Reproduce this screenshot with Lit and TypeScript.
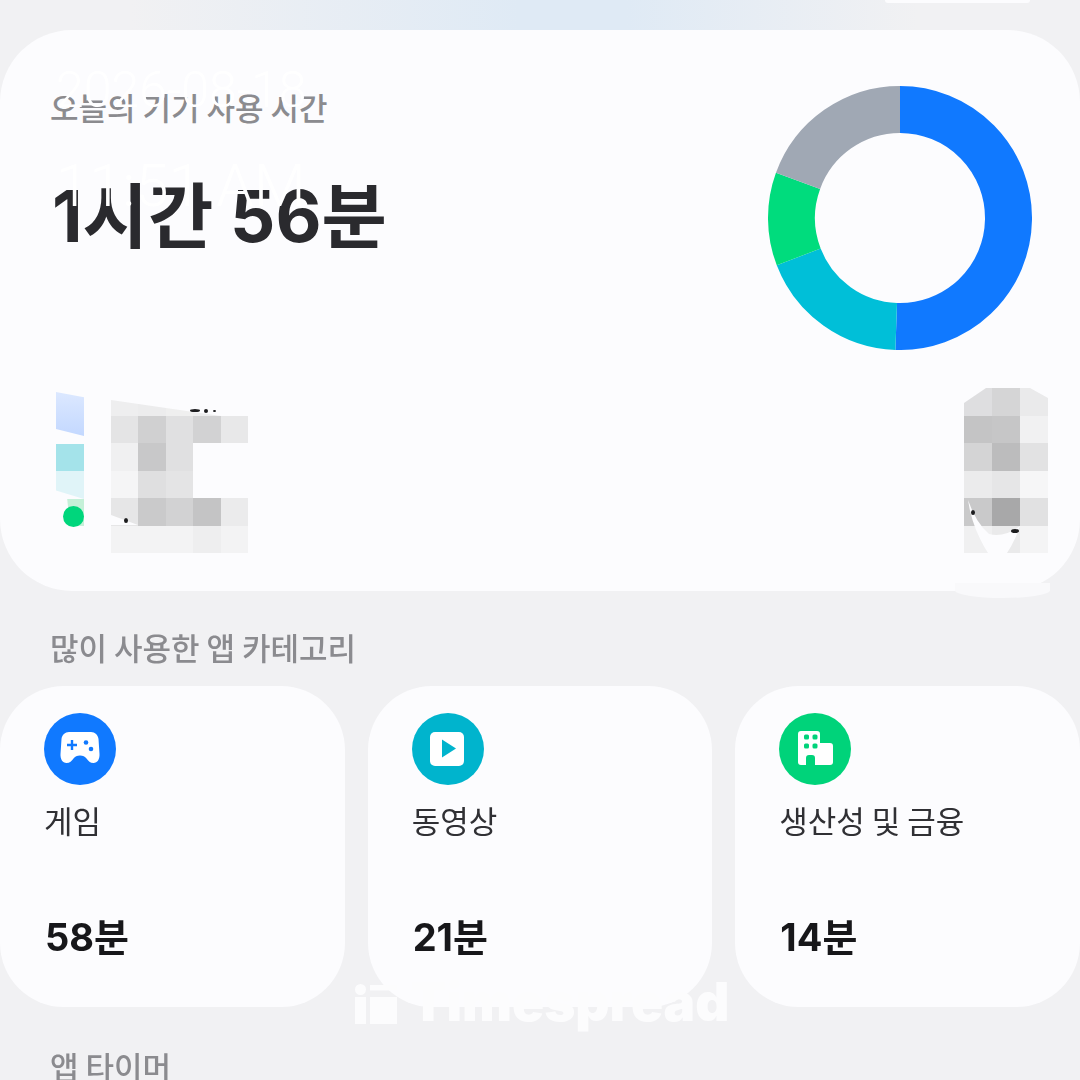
import { LitElement, html, css, svg } from 'lit';
import { customElement } from 'lit/decorators.js';

const CX = 132;
const R = 108.5;

// start / end angle in degrees, clockwise from 12 o'clock
const SEGMENTS = [
  { from: 0, to: 182, color: '#1079ff' },
  { from: 182, to: 249, color: '#00bfd8' },
  { from: 249, to: 290, color: '#00dc7d' },
  { from: 290, to: 360, color: '#a0a8b4' },
];

const LEFT_MOSAIC = [
  ['#eeeeef', '#ececed', '#efefef', '#ededee', ''],
  ['#e4e4e5', '#d0d0d1', '#e0e0e1', '#d2d2d3', '#e8e8e9'],
  ['#f0f0f1', '#c8c8c9', '#e0e0e1', '', ''],
  ['#f5f5f6', '#dfdfe0', '#e4e4e5', '', ''],
  ['#e6e6e7', '#cacacb', '#d2d2d3', '#c4c4c5', '#ebebec'],
  ['#f3f3f4', '#f3f3f4', '#f3f3f4', '#eeeeef', '#f3f3f4'],
];

const RIGHT_MOSAIC = [
  ['#dedee0', '#d5d5d6', '#eaeaeb'],
  ['#c4c4c5', '#c6c6c7', '#f1f1f2'],
  ['#d4d4d5', '#bcbcbd', '#e2e2e3'],
  ['#ebebec', '#e6e6e7', '#f6f6f7'],
  ['#c9c9ca', '#a8a8a9', '#e1e1e2'],
  ['#f0f0f1', '#eaeaeb', '#f4f4f5'],
];

// leftover specks of the blurred-out text: x, y, w, h inside each mosaic
const LEFT_SPECKS = [[79, 21, 10, 3], [93, 21, 4, 4], [102, 22, 3, 2], [13, 130, 4, 5]];
const RIGHT_SPECKS = [[7, 122, 4, 5], [47, 141, 8, 4]];

const GAME_ICON = svg`<path fill="#fff" d="M25 19h22c4 0 7 3 7.500 7l1 15c.3 5-2 9-6 9-3.500 0-5-2-7-4.500-1.500-2-3.500-3-6.500-3s-5 1-6.500 3c-2 2.500-3.500 4.500-7 4.500-4 0-6.300-4-6-9l1-15c.5-4 3.500-7 7.500-7z"/>
  <path fill="none" stroke="#1079ff" stroke-width="2.400" d="M28 27v10M23 32h10"/>
  <circle cx="42" cy="29.500" r="2.300" fill="#1079ff"/><circle cx="47" cy="36" r="2.300" fill="#1079ff"/>`;

const PLAY_ICON = svg`<rect x="18" y="19" width="34" height="34" rx="5" fill="#fff"/>
  <path fill="#00b4cd" d="M30 26.500v18l14-9z"/>`;

const BUILDING_ICON = svg`<path fill="#fff" d="M22 18h16c2 0 3 1 3 3v9h10c2 0 3 1 3 3v16c0 2-1 3-3 3H36v-7c0-2-1-3-3-3h-3c-2 0-3 1-3 3v7h-5c-2 0-3-1-3-3V21c0-2 1-3 3-3z"/>
  <g fill="#00d37a"><rect x="25" y="21.500" width="5" height="5" rx="1.500"/><rect x="33.500" y="21.500" width="5" height="5" rx="1.500"/>
  <rect x="25" y="30.500" width="5" height="5" rx="1.500"/><rect x="33.500" y="30.500" width="5" height="5" rx="1.500"/></g>`;

const CATEGORIES = [
  { icon: GAME_ICON, color: '#1079ff', label: '게임', value: '58분' },
  { icon: PLAY_ICON, color: '#00b4cd', label: '동영상', value: '21분' },
  { icon: BUILDING_ICON, color: '#00d37a', label: '생산성 및 금융', value: '14분' },
];

function arc(from: number, to: number) {
  const a = ((from - 90) * Math.PI) / 180;
  const b = ((to - 90) * Math.PI) / 180;
  const large = to - from > 180 ? 1 : 0;
  return `M${CX + R * Math.cos(a)} ${CX + R * Math.sin(a)}A${R} ${R} 0 ${large} 1 ${CX + R * Math.cos(b)} ${CX + R * Math.sin(b)}`;
}

@customElement('app-root')
export class AppRoot extends LitElement {
  static styles = css`
    :host {
      display: block;
      position: relative;
      width: 1080px;
      height: 1080px;
      overflow: hidden;
      background: #f1f1f3;
      font-family: 'Noto Sans CJK KR', 'Noto Sans', sans-serif;
    }

    /* the reference is a soft upscale, the watermarks on top of it are crisp */
    .page {
      filter: blur(0.6px);
    }

    .top-band {
      height: 30px;
      display: flex;
      justify-content: flex-end;
      padding-right: 50px;
      box-sizing: border-box;
      background: linear-gradient(90deg, #f1f1f3 12%, #dfeaf5 48%, #dfeaf5 58%, #f1f1f3 85%);
    }
    .pill {
      width: 145px;
      height: 3px;
      background: #fcfcfe;
      border-radius: 0 0 10px 10px;
    }

    .summary {
      position: relative;
      height: 561px;
      box-sizing: border-box;
      padding: 56px 32px 38px 50px;
      display: flex;
      flex-direction: column;
      justify-content: space-between;
      background: #fcfcfe;
      border-radius: 72px;
    }
    .summary-top {
      display: flex;
      justify-content: space-between;
      padding-right: 16px;
    }
    .muted {
      margin: 0;
      font-size: 31px;
      line-height: 44px;
      font-weight: 500;
      color: #8b8b8f;
    }
    .title {
      margin-top: -1px;
    }
    .total {
      margin-top: 47px;
      margin-left: 2px;
      font-family: Inter, 'Noto Sans CJK KR', sans-serif;
      font-size: 71px;
      line-height: 80px;
      font-weight: 700;
      color: #2a2a2e;
    }
    .donut {
      display: block;
      width: 264px;
      height: 264px;
    }

    .summary-bottom {
      display: flex;
      justify-content: space-between;
      align-items: flex-end;
    }
    .legend {
      display: flex;
      align-items: flex-end;
      gap: 27px;
      padding-left: 6px;
    }
    .swatches {
      position: relative;
      display: flex;
      flex-direction: column;
      align-self: flex-start;
      width: 28px;
      margin-top: 4px;
    }
    .swatch-blue {
      height: 44px;
      background: linear-gradient(#dce8ff, #c3d8ff);
      clip-path: polygon(0 0, 100% 12%, 100% 100%, 0 84%);
      margin-bottom: 8px;
    }
    .swatch-cyan {
      height: 27px;
      background: #a4e3ea;
    }
    .swatch-pale {
      height: 28px;
      background: #e0f4f8;
      clip-path: polygon(0 0, 100% 0, 100% 100%, 0 70%);
    }
    .swatch-green {
      height: 27px;
      background: #c5f0d8;
      clip-path: polygon(40% 0, 100% 0, 100% 100%, 50% 100%);
    }
    .dot {
      position: absolute;
      left: 7px;
      bottom: -1px;
      width: 21px;
      height: 21px;
      border-radius: 50%;
      background: #00d67c;
    }

    .mosaic-wrap {
      position: relative;
    }
    .mosaic {
      display: grid;
      grid-auto-rows: 27.500px;
    }
    .mosaic.left {
      grid-template-columns: repeat(5, 27.400px);
      clip-path: polygon(0 12px, 110px 28px, 137px 28px, 137px 100%, 0 100%, 0 137px, 27px 137px, 0 127px);
    }
    .mosaic.right {
      grid-template-columns: repeat(3, 28px);
      clip-path: polygon(22px 0, 66px 0, 84px 10px, 84px 100%, 0 100%, 0 15px);
    }
    .speck {
      position: absolute;
      border-radius: 50%;
      background: #1c1c1e;
    }
    .crescent {
      position: absolute;
      left: 0;
      top: 0;
      width: 84px;
      height: 165px;
    }
    .smear {
      position: absolute;
      left: 955px;
      top: 553px;
      width: 95px;
      height: 15px;
      background: #f9f9fb;
      border-radius: 0 0 50% 50%;
    }

    .heading {
      padding: 34px 50px 17px;
    }
    .heading.timer {
      padding-top: 37px;
    }
    .cats {
      display: grid;
      grid-template-columns: repeat(3, 1fr);
      gap: 23px;
    }
    .cat {
      height: 321px;
      box-sizing: border-box;
      padding: 27px 0 0 44px;
      background: #fcfcfe;
      border-radius: 64px;
      display: flex;
      flex-direction: column;
    }
    .cat-icon {
      display: block;
      width: 72px;
      height: 72px;
    }
    .cat-label {
      margin-top: 12px;
      font-size: 31px;
      line-height: 46px;
      color: #303034;
    }
    .cat-value {
      margin-top: 66px;
      margin-left: 1px;
      font-family: Inter, 'Noto Sans CJK KR', sans-serif;
      font-size: 38px;
      line-height: 56px;
      font-weight: 700;
      color: #17171a;
    }

    .stamp {
      position: absolute;
      left: 56px;
      font-family: Roboto, sans-serif;
      font-weight: 300;
      color: #fff;
    }
    .stamp.date {
      top: 62px;
      font-size: 50px;
      line-height: 56px;
    }
    .stamp.time {
      top: 152px;
      font-size: 60px;
      line-height: 68px;
    }

    .brand {
      position: absolute;
      left: 355px;
      top: 967px;
      display: flex;
      align-items: center;
      gap: 13px;
      color: #fcfcfd;
      font-family: Inter, sans-serif;
      font-weight: 900;
      font-size: 53px;
      line-height: 70px;
    }
    .brand svg {
      display: block;
      width: 42px;
      height: 40px;
    }
    .brand span {
      margin-bottom: 4px;
    }
  `;

  private mosaic(kind: string, rows: string[][], specks: number[][]) {
    return html`<div class="mosaic-wrap">
      <div class="mosaic ${kind}">
        ${rows.flat().map((c) => html`<div style="background:${c || 'transparent'}"></div>`)}
      </div>
      ${kind === 'right'
        ? html`<svg class="crescent" viewBox="0 0 84 165">
            <path fill="#fcfcfe" d="M4 112Q8 140 24 165H43Q50 155 56 138Q40 150 25 146Q12 135 4 112z" />
          </svg>`
        : ''}
      ${specks.map(
        ([x, y, w, h]) =>
          html`<div class="speck" style="left:${x}px;top:${y}px;width:${w}px;height:${h}px"></div>`
      )}
    </div>`;
  }

  render() {
    return html`
      <div class="page">
        <div class="top-band"><div class="pill"></div></div>

        <section class="summary">
          <div class="summary-top">
            <div>
              <p class="muted title">오늘의 기기 사용 시간</p>
              <div class="total">1시간 56분</div>
            </div>
            <svg class="donut" viewBox="0 0 264 264" fill="none" stroke-width="47">
              ${SEGMENTS.map((s) => svg`<path d=${arc(s.from, s.to)} stroke=${s.color} />`)}
            </svg>
          </div>
          <div class="summary-bottom">
            <div class="legend">
              <div class="swatches">
                <div class="swatch-blue"></div>
                <div class="swatch-cyan"></div>
                <div class="swatch-pale"></div>
                <div class="swatch-green"></div>
                <div class="dot"></div>
              </div>
              ${this.mosaic('left', LEFT_MOSAIC, LEFT_SPECKS)}
            </div>
            ${this.mosaic('right', RIGHT_MOSAIC, RIGHT_SPECKS)}
          </div>
          <div class="smear"></div>
        </section>

        <p class="muted heading">많이 사용한 앱 카테고리</p>
        <div class="cats">
          ${CATEGORIES.map(
            (c) => html`<div class="cat">
              <svg class="cat-icon" viewBox="0 0 72 72">
                <circle cx="36" cy="36" r="36" fill=${c.color} />
                ${c.icon}
              </svg>
              <div class="cat-label">${c.label}</div>
              <div class="cat-value">${c.value}</div>
            </div>`
          )}
        </div>
        <p class="muted heading timer">앱 타이머</p>
      </div>

      <div class="stamp date">2026-08-18</div>
      <div class="stamp time">11:51 AM</div>
      <div class="brand">
        <svg viewBox="0 0 42 40" fill="currentColor">
          <circle cx="5.500" cy="5.500" r="5.500" />
          <rect x="0" y="13" width="11" height="27" />
          <rect x="15" y="1" width="27" height="5.500" />
          <rect x="15" y="13" width="27" height="27" />
        </svg>
        <span>Timespread</span>
      </div>
    `;
  }
}
